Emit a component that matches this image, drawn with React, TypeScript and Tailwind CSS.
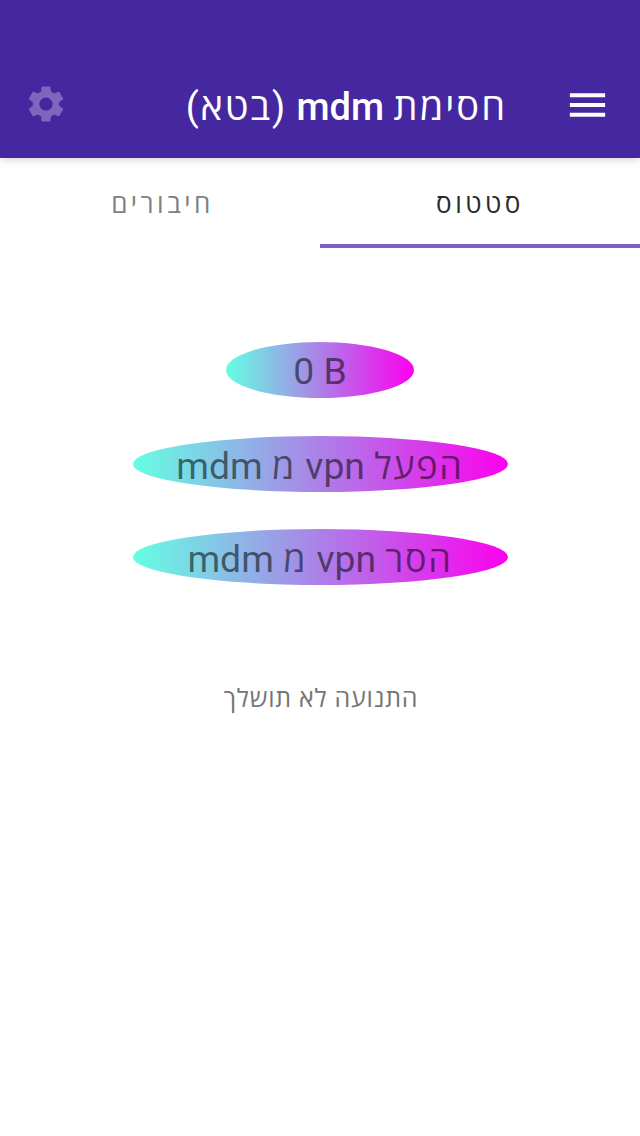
import { MdMenu, MdSettings } from "react-icons/md";

function Header() {
  return (
    <header className="flex h-[158px] items-end bg-[#45289f] pr-[23px] pb-[30px] pl-6 text-white shadow-[0_2px_8px_rgba(0,0,0,0.16)]">
      <button className="p-1.5 pb-[5px]">
        <MdMenu className="-mb-1.5 h-12 w-[47px]" />
      </button>
      <h1 className="mr-[51px] text-[38px] leading-[42px]">
        <span className="tracking-[2px]">חסימת</span> <span className="font-medium">mdm</span>{" "}
        <span className="tracking-[1.8px]">(בטא)</span>
      </h1>
      <button className="mr-auto pb-0.5">
        <MdSettings className="size-[44px] text-[#7e66bd]" />
      </button>
    </header>
  );
}

function Tabs() {
  return (
    <nav className="grid h-[90px] grid-cols-2 text-[26px] tracking-[3.5px]">
      <button className="border-b-4 border-[#7e5fbd] pt-[7px] text-[#2b2b2b]">סטטוס</button>
      <button className="border-b-4 border-transparent pt-[7px] pl-[5px] text-[#808080]">חיבורים</button>
    </nav>
  );
}

// Oval gradient button. The verb gets wider tracking than the Latin words.
function VpnButton({ verb }: { verb: string }) {
  return (
    <button className="h-14 w-[375px] rounded-[50%] bg-linear-to-r/srgb from-[#64ffe3] via-[#ac80e8] to-[#fc00ee] pt-1.5 text-[37.3px] leading-none text-black/55">
      <span className="text-[36px] tracking-[1.7px]">{verb}</span> vpn{" "}
      <span className="text-[36px] tracking-[1.7px]">מ</span> mdm
    </button>
  );
}

export default function App() {
  return (
    <div dir="rtl" className="min-h-[1136px] bg-white font-[Roboto,'Open_Sans',sans-serif]">
      <Header />
      <Tabs />
      <main className="flex flex-col items-center pt-[94px]">
        <div className="flex flex-col items-center gap-[37.5px]">
          <div
            dir="ltr"
            className="flex h-14 w-[188px] items-center justify-center rounded-[50%] bg-linear-to-r/srgb from-[#64ffe3] via-[#ac80e8] to-[#fc00ee] pt-1 text-[37.3px] leading-none text-black/55"
          >
            0 B
          </div>
          <VpnButton verb="הפעל" />
          <VpnButton verb="הסר" />
        </div>
        <p className="mt-[95px] pl-0.5 text-[25px] leading-[38px] tracking-[0.8px] text-[#757575]">התנועה לא תושלך</p>
      </main>
    </div>
  );
}
